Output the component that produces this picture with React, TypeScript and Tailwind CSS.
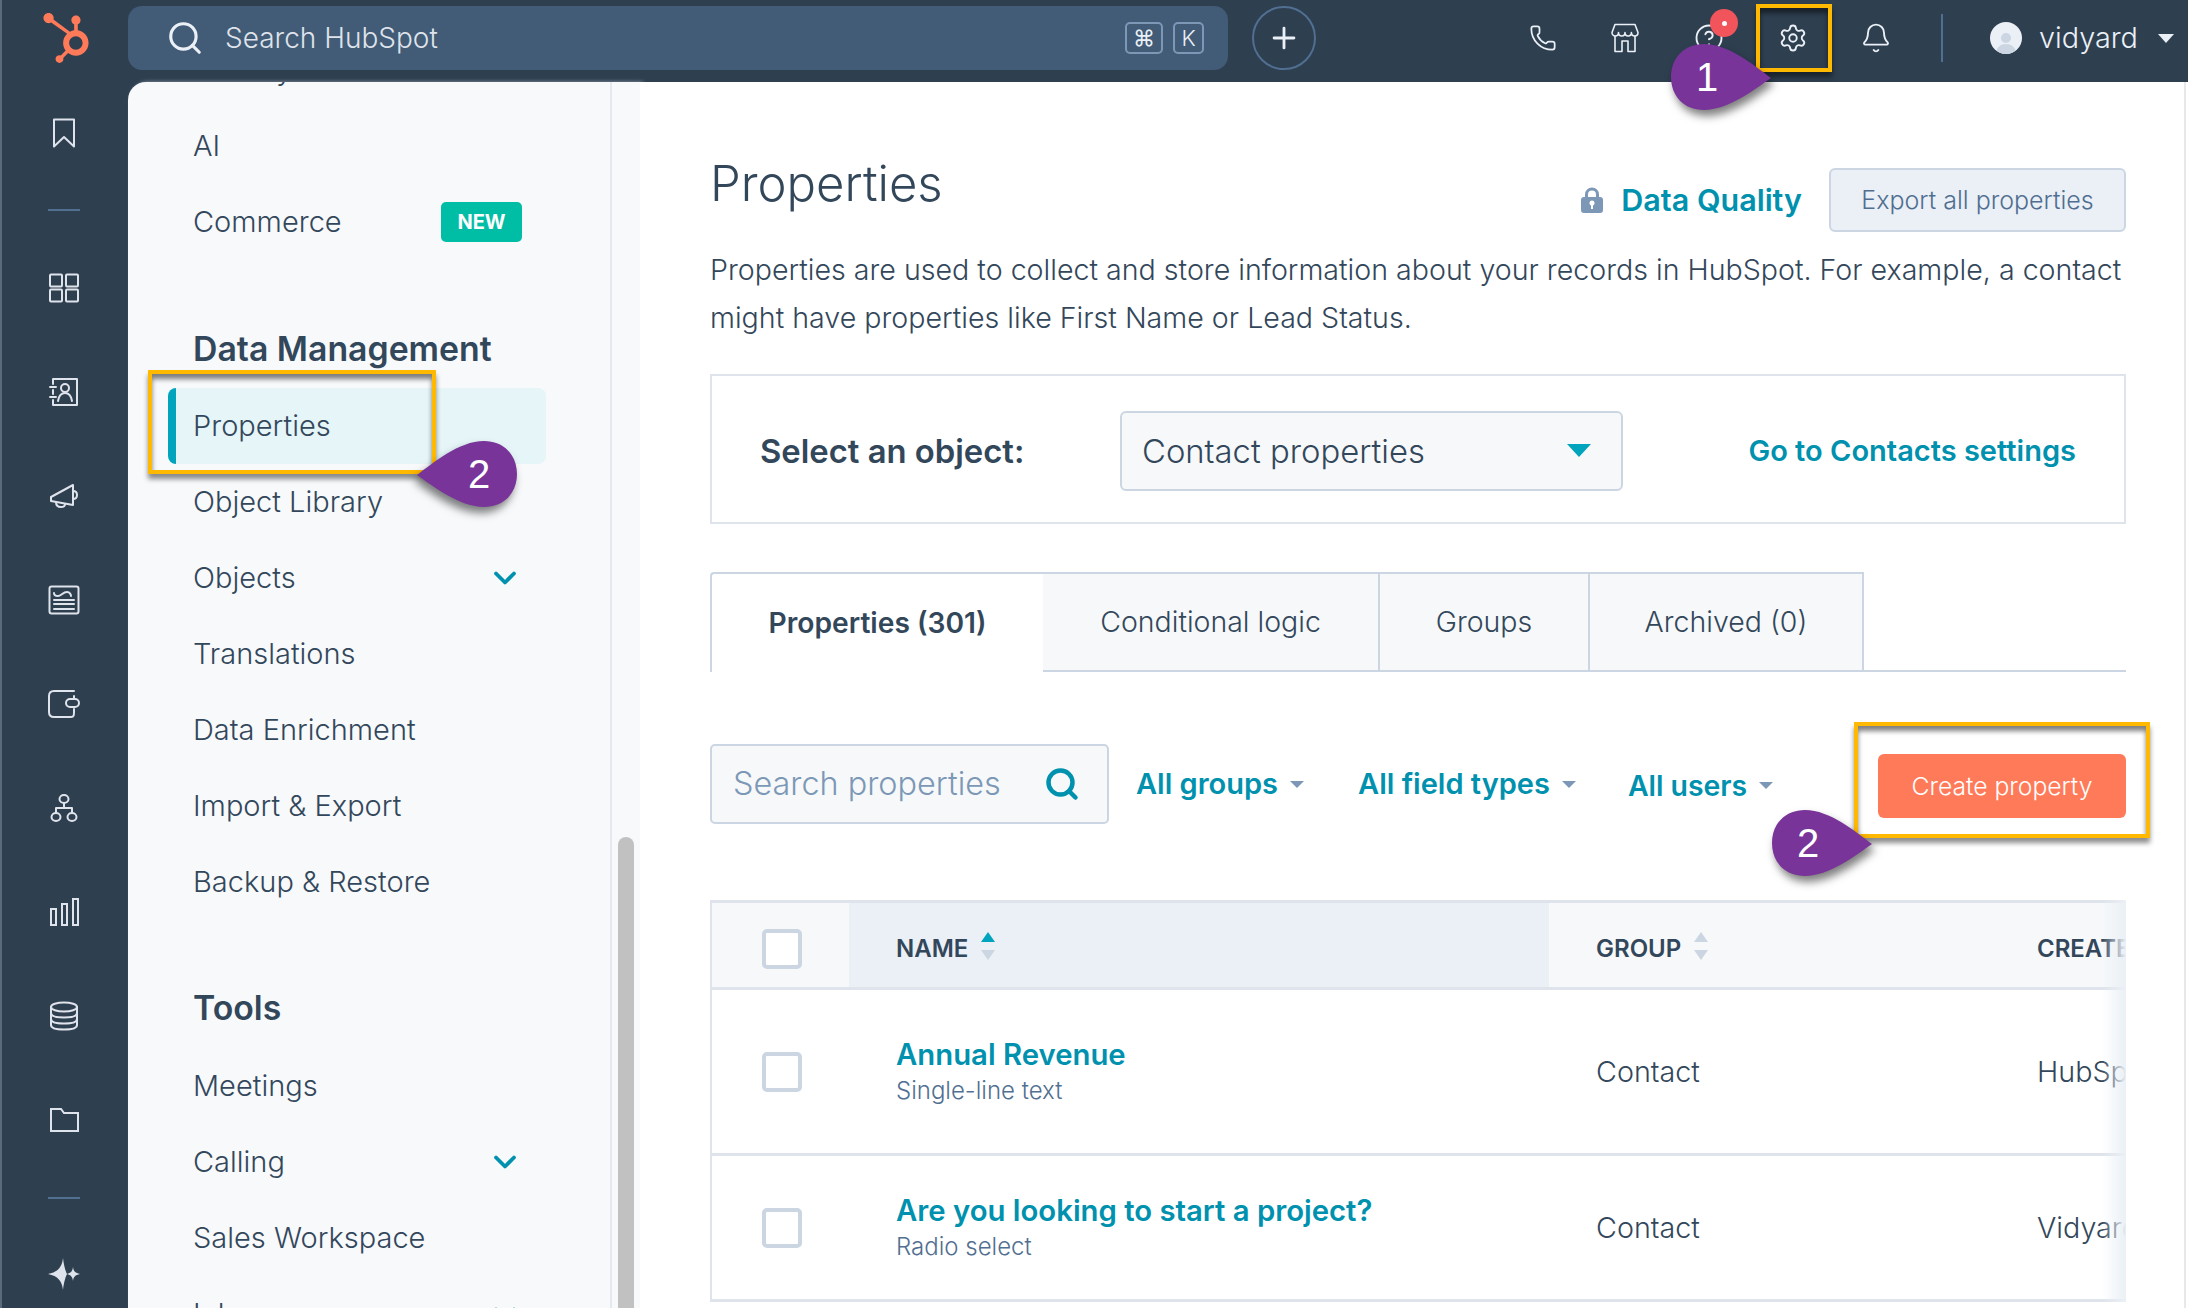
import React from "react";
import { Phone, CircleHelp, Settings, Bell, Plus, Search, ChevronDown } from "lucide-react";
import { FaHubspot } from "react-icons/fa";

const railStroke = { fill: "none", stroke: "#dfe3eb", strokeWidth: 2, strokeLinecap: "round", strokeLinejoin: "round" } as const;

function RailIcon({ children, line, h }: { children?: React.ReactNode; line?: boolean; h?: string }) {
  if (line) {
    return (
      <div className="flex h-[52px] w-full shrink-0 items-center justify-center">
        <div className="h-[2px] w-[32px] bg-[#516f90]" />
      </div>
    );
  }
  return <div className={`flex w-full shrink-0 items-center justify-center ${h ?? "h-[104px]"}`}>{children}</div>;
}

function Rail() {
  return (
    <div className="flex h-full w-[126px] shrink-0 flex-col pr-[2px]">
      <RailIcon h="h-[102px]">
        <svg width="24" height="30" viewBox="0 0 24 30" {...railStroke}><path d="M2 1.500h20v27l-10-9.500-10 9.500z" /></svg>
      </RailIcon>
      <RailIcon line />
      <RailIcon>
        <svg width="32" height="30" viewBox="0 0 32 30" {...railStroke}><rect x="2" y="1.500" width="12" height="12" rx="1" /><rect x="18" y="1.500" width="12" height="12" rx="1" /><rect x="2" y="16.500" width="12" height="12" rx="1" /><rect x="18" y="16.500" width="12" height="12" rx="1" /></svg>
      </RailIcon>
      <RailIcon>
        <svg width="30" height="30" viewBox="0 0 30 30" {...railStroke}><path d="M4 2h24v26H4v-5M4 17v-4M4 7V2" /><path d="M1 10h6M1 20h6" /><circle cx="16" cy="11" r="4" /><path d="M9 24c1-6 4-8 7-8s6 2 7 8" /></svg>
      </RailIcon>
      <RailIcon>
        <svg width="32" height="30" viewBox="0 0 32 30" {...railStroke}><path d="M3 16l22-12v20L3 20z" /><path d="M25 10c3 0 4 2 4 4s-1 4-4 4" /><path d="M8 21c0 4 3 5 5 5s4-1 4-3" /></svg>
      </RailIcon>
      <RailIcon>
        <svg width="32" height="30" viewBox="0 0 32 30" {...railStroke}><rect x="1.500" y="1.500" width="29" height="27" rx="2" /><path d="M6 8c0 2 2 3 4 3 3 0 5-4 9-4 3 0 4 3 4 4M6 15h20M6 19h20M6 24h20" /></svg>
      </RailIcon>
      <RailIcon>
        <svg width="34" height="30" viewBox="0 0 34 30" {...railStroke}><path d="M27 2H7C3 2 2 4 2 7v16c0 3 1 5 5 5h17c3 0 3-2 3-5v-3" /><rect x="19" y="10" width="13" height="8" rx="4" /><path d="M27 10V7" /></svg>
      </RailIcon>
      <RailIcon>
        <svg width="28" height="30" viewBox="0 0 28 30" {...railStroke}><ellipse cx="14" cy="6" rx="4.500" ry="4" /><ellipse cx="6" cy="24" rx="4.500" ry="4" /><ellipse cx="22" cy="24" rx="4.500" ry="4" /><path d="M14 10v5M6 20v-5h16v5" /></svg>
      </RailIcon>
      <RailIcon>
        <svg width="30" height="30" viewBox="0 0 30 30" {...railStroke} strokeLinecap="butt" strokeLinejoin="miter"><rect x="2" y="12" width="5" height="16" /><rect x="13" y="7" width="5" height="21" /><rect x="24" y="2" width="5" height="26" /></svg>
      </RailIcon>
      <RailIcon>
        <svg width="30" height="30" viewBox="0 0 30 30" {...railStroke}><ellipse cx="15" cy="6" rx="13" ry="4.500" /><path d="M2 6v18c0 3 6 4.500 13 4.500S28 27 28 24V6M2 12c0 3 6 4.500 13 4.500S28 15 28 12M2 18c0 3 6 4.500 13 4.500S28 21 28 18" /></svg>
      </RailIcon>
      <RailIcon>
        <svg width="30" height="26" viewBox="0 0 30 26" {...railStroke} strokeLinecap="butt" strokeLinejoin="miter"><path d="M2 2h10l3 4h14v18H2z" /></svg>
      </RailIcon>
      <RailIcon line />
      <RailIcon h="h-[100px]">
        <svg width="34" height="34" viewBox="0 0 34 34" fill="#dfe3eb"><path d="M16 1c1 9 3 14 4 16-1 2-3 7-4 16-1-9-5-14-15-16 10-2 14-7 15-16z" /><path d="M26 10c.5 4 2 6 7 7-5 1-6.500 3-7 7-.5-4-2-6-6-7 4-1 5.500-3 6-7z" /></svg>
      </RailIcon>
    </div>
  );
}

function NavItem({ label, badge, chevron, active }: { label: string; badge?: boolean; chevron?: boolean; active?: boolean }) {
  return (
    <div className={`flex h-[76px] shrink-0 items-center justify-between rounded-[8px] pl-[17px] text-[29px] font-light text-[#33475b] ${active ? "border-l-[8px] border-[#00a4bd] bg-[#e5f5f8]" : "border-l-[8px] border-transparent"}`}>
      <span>{label}</span>
      {badge && (
        <span className="mr-[24px] flex h-[40px] w-[81px] items-center justify-center rounded-[5px] bg-[#00bda5] text-[20px] font-bold text-white">NEW</span>
      )}
      {chevron && <ChevronDown className="mr-[23px] text-[#0091ae]" size={36} strokeWidth={2.5} />}
    </div>
  );
}

function SectionTitle({ label }: { label: string }) {
  return <div className="flex h-[76px] shrink-0 items-center pl-[25px] text-[33.800px] font-semibold text-[#33475b]">{label}</div>;
}

function Sidebar() {
  return (
    <div className="flex h-full w-[512px] shrink-0 overflow-hidden rounded-tl-[18px] bg-[#f7f9fb] shadow-[3px_0_4px_rgba(203,214,226,0.6)]">
      <div className="flex h-full w-[484px] shrink-0 flex-col overflow-hidden border-r-[2px] border-[#e5e9ef] pl-[40px] pr-[64px]">
        <div className="-mt-[50px]">
          <NavItem label="Privacy & Consent" />
        </div>
        <NavItem label="AI" />
        <NavItem label="Commerce" badge />
        <div className="mb-[1px] mt-[51px]"><SectionTitle label="Data Management" /></div>
        <NavItem label="Properties" active />
        <NavItem label="Object Library" />
        <NavItem label="Objects" chevron />
        <NavItem label="Translations" />
        <NavItem label="Data Enrichment" />
        <NavItem label="Import & Export" />
        <NavItem label="Backup & Restore" />
        <div className="mb-[2px] mt-[50px]"><SectionTitle label="Tools" /></div>
        <NavItem label="Meetings" />
        <NavItem label="Calling" chevron />
        <NavItem label="Sales Workspace" />
        <NavItem label="Inbox" chevron />
      </div>
      <div className="h-full w-[28px] pl-[6px] pt-[755px]">
        <div className="h-full w-[16px] rounded-t-full bg-[#c1c1c1]" />
      </div>
    </div>
  );
}

function Tab({ label, active, w }: { label: string; active?: boolean; w: string }) {
  return (
    <div className={`flex h-full items-center justify-center border-t-[2px] border-[#cbd6e2] text-[#33475b] ${w} ${active ? "rounded-tl-[4px] border-l-[2px] bg-white text-[28.200px] font-semibold" : "border-b-[2px] border-r-[2px] bg-[#f6f8fa] text-[28.500px] font-light"}`}>
      {label}
    </div>
  );
}

function Filter({ label, className }: { label: string; className: string }) {
  return (
    <div className={`flex items-center gap-[12px] font-semibold text-[#0091ae] ${className}`}>
      <span>{label}</span>
      <span className="h-0 w-0 border-x-[7px] border-t-[7px] border-x-transparent border-t-[#7c98b6]" />
    </div>
  );
}

function SortArrows({ active }: { active?: boolean }) {
  return (
    <span className="-mt-[6px] ml-[13px] flex flex-col gap-[8px]">
      <span className={`h-0 w-0 border-x-[7px] border-b-[10px] border-x-transparent ${active ? "border-b-[#00a4bd]" : "border-b-[#cbd6e2]"}`} />
      <span className="h-0 w-0 border-x-[7px] border-t-[10px] border-x-transparent border-t-[#cbd6e2]" />
    </span>
  );
}

function Checkbox() {
  return <div className="h-[40px] w-[40px] rounded-[5px] border-[4px] border-[#cbd6e2] bg-white" />;
}

function Row({ name, type, owner, h }: { name: string; type: string; owner: string; h: string }) {
  return (
    <div className={`flex items-center whitespace-nowrap border-b-[3px] border-[#dfe3eb] ${h}`}>
      <div className="flex w-[137px] shrink-0 justify-center pl-[2px] pt-[1px]"><Checkbox /></div>
      <div className="flex w-[700px] shrink-0 flex-col pl-[47px]">
        <span className="text-[29.300px] font-semibold leading-[38px] text-[#0091ae]">{name}</span>
        <span className="text-[24px] font-light leading-[34px] text-[#516f90]">{type}</span>
      </div>
      <div className="w-[488px] shrink-0 pl-[47px] text-[28.700px] font-light text-[#33475b]">Contact</div>
      <div className="text-[28.700px] font-light text-[#33475b]">{owner}</div>
    </div>
  );
}

function Main() {
  return (
    <div className="flex h-full min-w-0 flex-1 overflow-hidden bg-white pr-[2px]">
      <div className="h-full min-w-0 flex-1 overflow-hidden pl-[70px] pr-[58px] pt-[64px]">
        <div className="flex h-[88px] items-start">
          <h1 className="flex-1 text-[49px] font-light leading-[76px] text-[#33475b]">Properties</h1>
          <div className="mt-[22px] flex items-center">
            <svg width="24" height="26" viewBox="0 0 24 26" className="mr-[17px]">
              <path d="M6.500 12V7.500a5.500 5.500 0 0 1 11 0V12" fill="none" stroke="#7c98b6" strokeWidth="3" />
              <rect x="1" y="10" width="22" height="16" rx="3" fill="#7c98b6" />
              <circle cx="12" cy="16" r="2.500" fill="#ffffff" />
              <rect x="11" y="17" width="2" height="5" fill="#ffffff" />
            </svg>
            <span className="mr-[27px] text-[30.500px] font-semibold text-[#0091ae]">Data Quality</span>
            <div className="flex h-[64px] w-[297px] items-center justify-center rounded-[6px] border-[2px] border-[#cbd6e2] bg-[#eaf0f6] pt-[1px] text-[25px] font-light text-[#506e91]">Export all properties</div>
          </div>
        </div>
        <p className="mt-[12px] text-[28.600px] font-light leading-[48px] text-[#33475b]">
          Properties are used to collect and store information about your records in HubSpot. For example, a contact might have properties like First Name or Lead Status.
        </p>
        <div className="mt-[32px] flex h-[150px] items-center border-[2px] border-[#dfe3eb] pl-[48px] pr-[48px] pt-[3px]">
          <span className="w-[360px] pt-[2px] text-[32.800px] font-semibold text-[#33475b]">Select an object:</span>
          <div className="flex h-[80px] w-[503px] items-center justify-between rounded-[6px] border-[2px] border-[#cbd6e2] bg-[#f6f8fa] px-[20px]">
            <span className="pt-[2px] text-[32.800px] font-light text-[#33475b]">Contact properties</span>
            <span className="mr-[10px] h-0 w-0 border-x-[12px] border-t-[13px] border-x-transparent border-t-[#00a4bd]" />
          </div>
          <span className="ml-auto text-[29px] font-semibold text-[#0091ae]">Go to Contacts settings</span>
        </div>
        <div className="mt-[48px] flex h-[100px]">
          <Tab label="Properties (301)" active w="w-[333px]" />
          <Tab label="Conditional logic" w="w-[337px]" />
          <Tab label="Groups" w="w-[210px]" />
          <Tab label="Archived (0)" w="w-[274px]" />
          <div className="flex-1 border-b-[2px] border-[#cbd6e2]" />
        </div>
        <div className="mt-[72px] flex h-[80px] items-center">
          <div className="flex h-[80px] w-[399px] items-center justify-between rounded-[5px] border-[2px] border-[#cbd6e2] bg-[#f6f8fa] pl-[21px] pr-[27px]">
            <span className="text-[32.400px] font-light text-[#7c98b6]">Search properties</span>
            <Search className="text-[#0091ae]" size={36} strokeWidth={3} />
          </div>
          <Filter label="All groups" className="ml-[27px] text-[29px]" />
          <Filter label="All field types" className="ml-[54px] text-[29px]" />
          <Filter label="All users" className="ml-[52px] pt-[4px] text-[28.400px]" />
          <div className="ml-auto mt-[4px] flex h-[64px] w-[248px] items-center justify-center rounded-[6px] bg-[#ff7a59] pt-[1px] text-[24.700px] font-light text-white">Create property</div>
        </div>
        <div className="relative mt-[76px] overflow-hidden border-l-[2px] border-[#dfe3eb]">
          <div className="flex h-[90px] whitespace-nowrap border-y-[3px] border-[#dfe3eb] bg-[#f6f8fa] text-[24px] font-semibold text-[#33475b]">
            <div className="flex w-[137px] shrink-0 items-center justify-center pl-[2px] pt-[7px]"><Checkbox /></div>
            <div className="flex w-[700px] shrink-0 items-center bg-[#eaf0f6] pl-[47px] pt-[7px]">NAME<SortArrows active /></div>
            <div className="flex w-[488px] shrink-0 items-center pl-[47px] pt-[7px]">GROUP<SortArrows /></div>
            <div className="flex items-center pt-[7px]">CREATED BY</div>
          </div>
          <Row name="Annual Revenue" type="Single-line text" owner="HubSpot" h="h-[166px]" />
          <Row name="Are you looking to start a project?" type="Radio select" owner="Vidyard" h="h-[146px]" />
          <div className="absolute inset-y-0 right-0 w-[24px] bg-gradient-to-r from-transparent to-[#eaf0f6]" />
        </div>
      </div>
      <div className="h-full w-[2px] shrink-0 bg-[#e8e8e8]" />
    </div>
  );
}

function Teardrop({ digit, flip, className }: { digit: string; flip?: boolean; className: string }) {
  return (
    <div className={`absolute h-[66px] w-[100px] ${className}`}>
      <svg width="100" height="66" viewBox="0 0 100 66" className={`absolute inset-0 overflow-visible drop-shadow-[3px_6px_4px_rgba(0,0,0,0.5)] ${flip ? "-scale-x-100" : ""}`}>
        <path d="M100 34C84 22 58 0 33 0 13 0 0 14 0 33s13 33 33 33c24 0 50-20 67-32z" fill="#783498" />
      </svg>
      <span className={`absolute top-0 flex h-full w-[66px] items-center justify-center font-['Liberation_Sans',sans-serif] text-[40px] text-white ${flip ? "right-[5px]" : "left-[3px]"}`}>{digit}</span>
    </div>
  );
}

function Gold({ className }: { className: string }) {
  return <div className={`absolute border-[4px] border-[#ffb900] shadow-[0_5px_5px_rgba(0,0,0,0.45),inset_0_5px_5px_rgba(0,0,0,0.5)] ${className}`} />;
}

export default function App() {
  return (
    <div className="relative flex h-[1308px] w-[2188px] flex-col overflow-hidden border-l-[2px] border-[#5b6b7b] bg-[#2e3f50] font-['Inter',sans-serif] text-[#33475b]">
      <div className="flex h-[82px] w-full shrink-0 items-center bg-[#2e3f50] pb-[12px] pt-[6px]">
        <div className="flex h-full w-[126px] shrink-0 items-center justify-center pl-[2px]">
          <FaHubspot className="text-[#ff7a59]" size={50} />
        </div>
        <div className="flex h-[64px] w-[1100px] shrink-0 items-center rounded-[14px] bg-[#425b76] pl-[38px] pr-[24px]">
          <Search className="text-[#eaf0f6]" size={38} strokeWidth={2} />
          <span className="ml-[21px] flex-1 text-[28px] font-light text-[#dfe3eb]">Search HubSpot</span>
          <span className="flex h-[32px] w-[38px] items-center justify-center rounded-[5px] border-[2px] border-[#7c98b6] text-[22px] text-[#eaf0f6]">⌘</span>
          <span className="ml-[10px] flex h-[32px] w-[31px] items-center justify-center rounded-[5px] border-[2px] border-[#7c98b6] text-[22px] font-light text-[#eaf0f6]">K</span>
        </div>
        <div className="ml-[24px] flex h-[64px] w-[64px] shrink-0 items-center justify-center rounded-full border-[2px] border-[#516f90]">
          <Plus className="text-[#eaf0f6]" size={34} strokeWidth={2} />
        </div>
        <div className="ml-[185px] flex items-center text-[#eaf0f6]">
          <div className="flex w-[83px] justify-center"><Phone size={28} strokeWidth={1.5} /></div>
          <div className="flex w-[83px] justify-center pr-[2px]">
            <svg width="30" height="30" viewBox="0 0 30 30" fill="none" stroke="currentColor" strokeWidth="1.600" strokeLinejoin="round"><path d="M5 1.500h20l3 8c0 2-1.500 3.500-3.300 3.500-1.800 0-3.200-1.500-3.300-3.500 0 2-1.500 3.500-3.300 3.500S15 11.500 15 9.500c0 2-1.400 3.500-3.200 3.500S8.500 11.500 8.500 9.500c0 2-1.400 3.500-3.200 3.500C3.500 13 2 11.500 2 9.500z" /><path d="M5 13v15.500h7V18h6v10.500h7V13" /></svg>
          </div>
          <div className="relative flex w-[83px] justify-center">
            <CircleHelp size={30} strokeWidth={1.5} />
            <span className="absolute left-[43px] -top-[14px] flex h-[28px] w-[28px] items-center justify-center rounded-full bg-[#f2545b]">
              <span className="h-[5px] w-[5px] rounded-full bg-white" />
            </span>
          </div>
          <div className="flex w-[83px] justify-center pl-[2px]"><Settings size={30} strokeWidth={1.5} /></div>
          <div className="flex w-[83px] justify-center pl-[3px]"><Bell size={32} strokeWidth={1.4} /></div>
        </div>
        <div className="ml-[25px] h-[48px] w-[2px] bg-[#516f90]" />
        <div className="ml-[47px] flex h-[32px] w-[32px] items-end justify-center overflow-hidden rounded-full bg-[#eaf0f6]">
          <svg width="24" height="28" viewBox="0 0 24 28" fill="#cbd6e2"><circle cx="12" cy="12" r="5" /><path d="M2 28c0-7 5-10 10-10s10 3 10 10z" /></svg>
        </div>
        <span className="ml-[17px] text-[28.800px] font-light text-[#eaf0f6]">vidyard</span>
        <span className="ml-[20px] h-0 w-0 border-x-[8px] border-t-[9px] border-x-transparent border-t-[#eaf0f6]" />
      </div>
      <div className="flex min-h-0 flex-1">
        <Rail />
        <Sidebar />
        <Main />
      </div>
      <Gold className="left-[146px] top-[370px] h-[104px] w-[288px]" />
      <Gold className="left-[1754px] top-[4px] h-[68px] w-[76px]" />
      <Gold className="left-[1852px] top-[722px] h-[116px] w-[296px]" />
      <Teardrop digit="2" flip className="left-[415px] top-[441px]" />
      <Teardrop digit="1" className="left-[1669px] top-[44px]" />
      <Teardrop digit="2" className="left-[1770px] top-[810px]" />
    </div>
  );
}
